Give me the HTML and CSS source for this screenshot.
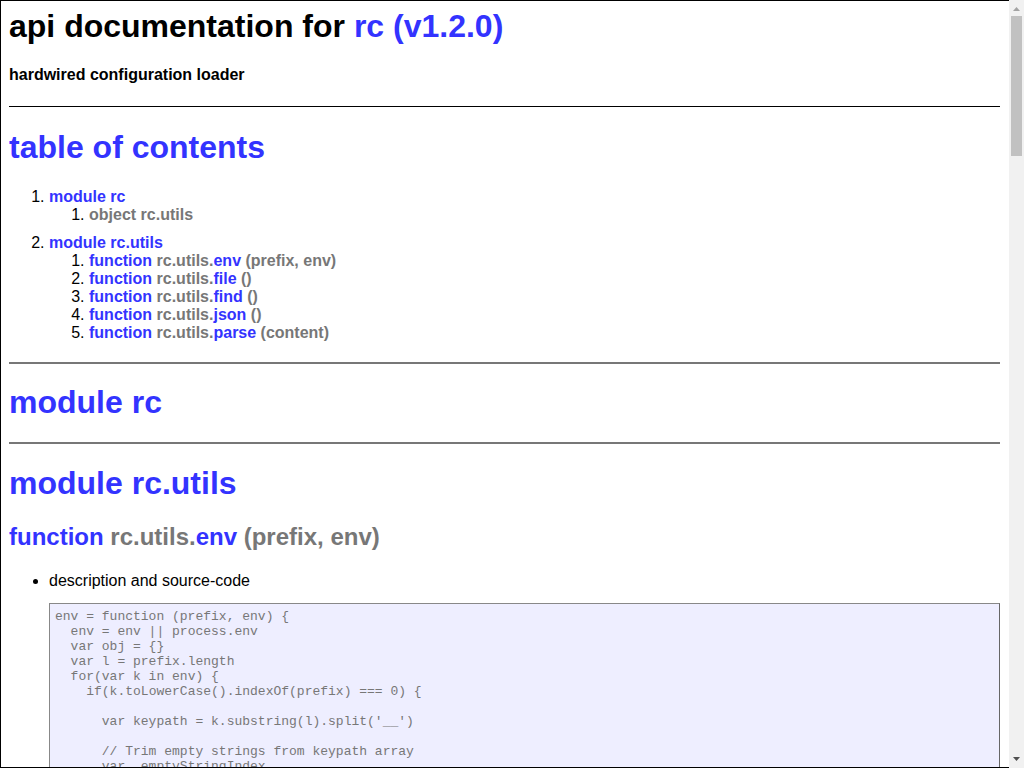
FILE: index.html
```html
<!DOCTYPE html>
<html lang="en">
<head>
<meta charset="utf-8">
<title>api documentation for rc (v1.2.0)</title>
<link rel="stylesheet" href="styles.css">
</head>
<body>
<div class="frame"></div>
<div class="scrollbar">
  <svg class="sb-arrow sb-up" width="15" height="16" viewBox="0 0 15 16"><path d="M4 11 L7.5 7 L11 11 Z" fill="#a3a3a3"/></svg>
  <div class="sb-thumb"></div>
  <svg class="sb-arrow sb-down" width="15" height="16" viewBox="0 0 15 16"><path d="M4 5 L11 5 L7.5 9 Z" fill="#505050"/></svg>
</div>
<div class="apidoc">
<h1 class="doc-title">api documentation for <a href="#">rc (v1.2.0)</a></h1>
<h4 class="doc-desc">hardwired configuration loader</h4>

<div class="section section-first">
<h1 class="section-title"><a href="#">table of contents</a></h1>
<ol class="toc">
<li class="toc-module"><a href="#">module rc</a>
<ol class="toc-sub">
<li><span class="sig">object rc.utils</span></li>
</ol>
</li>
<li class="toc-module"><a href="#">module rc.utils</a>
<ol class="toc-sub">
<li><a href="#">function <span class="sig">rc.utils.</span>env <span class="sig">(prefix, env)</span></a></li>
<li><a href="#">function <span class="sig">rc.utils.</span>file <span class="sig">()</span></a></li>
<li><a href="#">function <span class="sig">rc.utils.</span>find <span class="sig">()</span></a></li>
<li><a href="#">function <span class="sig">rc.utils.</span>json <span class="sig">()</span></a></li>
<li><a href="#">function <span class="sig">rc.utils.</span>parse <span class="sig">(content)</span></a></li>
</ol>
</li>
</ol>
</div>

<div class="section">
<h1 class="section-title"><a href="#">module rc</a></h1>
</div>

<div class="section">
<h1 class="section-title"><a href="#">module rc.utils</a></h1>

<h2 class="fn-title"><a href="#">function <span class="sig">rc.utils.</span>env <span class="sig">(prefix, env)</span></a></h2>
<ul class="fn-list">
<li>description and source-code
<pre class="code">env = function (prefix, env) {
  env = env || process.env
  var obj = {}
  var l = prefix.length
  for(var k in env) {
    if(k.toLowerCase().indexOf(prefix) === 0) {

      var keypath = k.substring(l).split('__')

      // Trim empty strings from keypath array
      var _emptyStringIndex
      while ((_emptyStringIndex=keypath.indexOf('')) &gt; -1) {
        keypath.splice(_emptyStringIndex, 1)
      }

      var cursor = obj
      keypath.forEach(function _buildSubObj(_subkey,i){

        // (check for _subkey first so we ignore empty strings)
        // (check for cursor to avoid assignment to primitive objects)
        if (!_subkey || typeof cursor !== 'object')
          return

        // If this is the last key, just stuff the value in there
        // Assigns actual value from env variable to final key
        // (unless it's just an empty string- in that case use the last valid key)
        if (i === keypath.length-1)
          cursor[_subkey] = env[k]


        // Build sub-object if nothing already exists at the keypath
        if (cursor[_subkey] === undefined)
          cursor[_subkey] = {}

        // Increment cursor used to track the object at the current depth
        cursor = cursor[_subkey]

      })

    }

  }

  return obj
}</pre>
</li>
<li>example usage
<pre class="code">...
    ? cc.json(defaults) : defaults
    ) || {}

  parse = parse || cc.parse

  var env = cc.env(name + '_')

  var configs = [defaults]
  var configFiles = []
  function addConfigFile (file) {
    if (configFiles.indexOf(file) &gt;= 0) return
    var fileConfig = cc.file(file)
    if (fileConfig) {
      configs.push(parse(fileConfig))
      configFiles.push(file)
    }
  }
...</pre>
</li>
</ul>

<h2 class="fn-title"><a href="#">function <span class="sig">rc.utils.</span>file <span class="sig">()</span></a></h2>
<ul class="fn-list">
<li>description and source-code
<pre class="code">file = function () {
  var args = [].slice.call(arguments).filter(function (arg) { return arg != null })

  //path.join breaks if it's a not a string, so just skip this.
  for(var i in args)
    if('string' !== typeof args[i])
      return

  var file = path.join.apply(null, args)
  var content
  try {
    return fs.readFileSync(file,'utf-8')
  } catch (err) {
    return
  }
}</pre>
</li>
<li>example usage
<pre class="code">...
  var configs = [defaults]
  var configFiles = []
  function addConfigFile (file) {
    if (configFiles.indexOf(file) &gt;= 0) return
    var fileConfig = cc.file(file)
    if (fileConfig) {
      configs.push(parse(fileConfig))
      configFiles.push(file)
    }
  }

  // which files do we look at?
  if (!win)
   [join(etc, name, 'config'),
    join(etc, name + 'rc')].forEach(addConfigFile)
...</pre>
</li>
</ul>

<h2 class="fn-title"><a href="#">function <span class="sig">rc.utils.</span>find <span class="sig">()</span></a></h2>
<ul class="fn-list">
<li>description and source-code
<pre class="code">find = function () {
  var rel = path.join.apply(null, [].slice.call(arguments))

  function find(start, rel) {
    var file = path.join(start, rel)
    try {
      fs.statSync(file)
      return file
    } catch (err) {
      if(path.dirname(start) !== start) // root
        return find(path.dirname(start), rel)
    }
  }
  return find(process.cwd(), rel)
}</pre>
</li>
<li>example usage
<pre class="code">...
  if (home)
   [join(home, '.config', name, 'config'),
    join(home, '.config', name),
    join(home, '.' + name, 'config'),
    join(home, '.' + name + 'rc')].forEach(addConfigFile)
  addConfigFile(cc.find('.'+name+'rc'))
  if (env.config) addConfigFile(env.config)
  if (argv.config) addConfigFile(argv.config)
...</pre>
</li>
</ul>

<h2 class="fn-title"><a href="#">function <span class="sig">rc.utils.</span>json <span class="sig">()</span></a></h2>
<ul class="fn-list">
<li>description and source-code
<pre class="code">json = function () {
  var content = file.apply(null, arguments)
  return content ? parse(content) : null
}</pre>
</li>
<li>example usage
<pre class="code">...
  if('string' !== typeof name)
    throw new Error('rc(name): name *must* be string')
  if(!argv)
    argv = require('minimist')(process.argv.slice(2))
  defaults = (
      'string' === typeof defaults
    ? cc.json(defaults) : defaults
    ) || {}

  parse = parse || cc.parse
...</pre>
</li>
</ul>

<h2 class="fn-title"><a href="#">function <span class="sig">rc.utils.</span>parse <span class="sig">(content)</span></a></h2>
<ul class="fn-list">
<li>description and source-code
<pre class="code">parse = function (content) {

  //if it ends in .json or starts with { then it must be json.
  //must be done this way, because ini accepts everything.
  //can't just try and parse it and let it throw if it's not ini.
  //everything is ini. even json with a syntax error.

  if(/^\s*{/.test(content))
    return JSON.parse(stripJsonComments(content))
  return ini.parse(content)

}</pre>
</li>
<li>example usage
<pre class="code">...
    ? cc.json(defaults) : defaults
    ) || {}

  parse = parse || cc.parse

  var env = cc.env(name + '_')
...</pre>
</li>
</ul>
</div>

<div class="footer">[ this document was created with <a href="#">utility2</a> ]</div>
</div>
</body>
</html>
```
FILE: styles.css
```css
html {
  background: #fff;
}

body {
  margin: 0 15px 0 0;
  color: #000;
  font-family: "Liberation Sans", Arial, sans-serif;
  font-size: 16px;
}

.frame {
  position: fixed;
  top: 0;
  left: 0;
  right: 15px;
  bottom: 0;
  border: 1px solid #000;
  border-right: 0;
  pointer-events: none;
  z-index: 10;
}

.scrollbar {
  position: fixed;
  top: 0;
  right: 0;
  bottom: 0;
  width: 15px;
  background: #f1f1f1;
  display: flex;
  flex-direction: column;
  z-index: 11;
}

.sb-arrow {
  display: block;
  flex: none;
}

.sb-up {
  height: 16px;
}

.sb-thumb {
  flex: none;
  height: 140px;
  margin: 0 2px;
  background: #c1c1c1;
}

.sb-down {
  margin-top: auto;
}

.apidoc {
  padding: 8px 9px 20px;
}

.apidoc a {
  color: #33f;
  text-decoration: none;
}

.doc-title {
  font-size: 32px;
  margin: 0 0 21.44px;
}

.doc-desc {
  font-size: 16px;
  margin: 21.28px 0;
}

.section {
  border-top: 2px solid #777;
  margin-top: 20px;
}

.section > .section-title:first-child {
  margin-top: 20.44px;
}

.section-first {
  border-top: 1px solid #000;
  padding-top: 1px;
}

.section-first > .section-title:first-child {
  margin-top: 21.44px;
}

.section-title {
  font-size: 32px;
  margin: 21.44px 0;
}

.toc {
  margin: 16px 0;
  padding-left: 40px;
}

.toc-sub {
  margin: 0;
  padding-left: 40px;
}

.toc-module {
  margin-top: 10px;
}

.toc a {
  font-weight: bold;
}

.sig {
  color: #777;
  font-weight: bold;
}

.fn-title {
  font-size: 24px;
  margin: 20.92px 0 20.92px;
}

.fn-list {
  margin: 16px 0;
  padding-left: 40px;
}

.code {
  background: #eef;
  border: 1px solid #888;
  border-right-color: #666;
  border-bottom-color: #666;
  color: #777;
  font-family: "Liberation Mono", "DejaVu Sans Mono", monospace;
  font-size: 13px;
  margin: 13px 0;
  padding: 5px;
  white-space: pre-wrap;
}

.footer {
  margin-top: 20px;
  text-align: center;
}
```
